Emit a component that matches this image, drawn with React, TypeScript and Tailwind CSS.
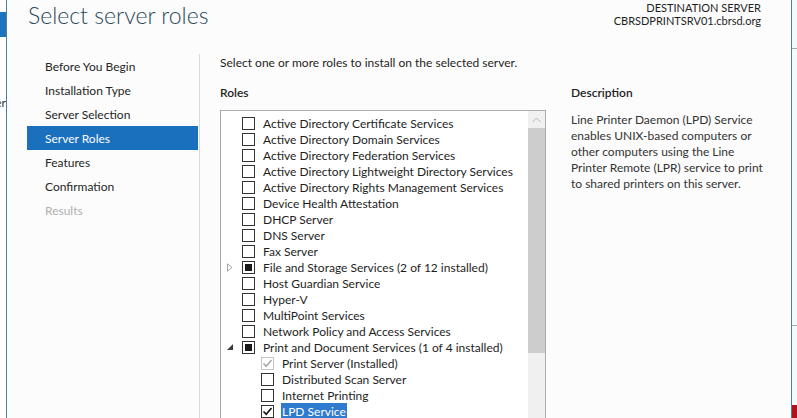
import type { ReactNode } from 'react';

type Mark = 'none' | 'partial' | 'checked' | 'installed';

interface Role {
  label: string;
  mark?: Mark;
  expander?: 'closed' | 'open';
  child?: boolean;
  selected?: boolean;
}

const ROLES: Role[] = [
  { label: 'Active Directory Certificate Services' },
  { label: 'Active Directory Domain Services' },
  { label: 'Active Directory Federation Services' },
  { label: 'Active Directory Lightweight Directory Services' },
  { label: 'Active Directory Rights Management Services' },
  { label: 'Device Health Attestation' },
  { label: 'DHCP Server' },
  { label: 'DNS Server' },
  { label: 'Fax Server' },
  { label: 'File and Storage Services (2 of 12 installed)', mark: 'partial', expander: 'closed' },
  { label: 'Host Guardian Service' },
  { label: 'Hyper-V' },
  { label: 'MultiPoint Services' },
  { label: 'Network Policy and Access Services' },
  { label: 'Print and Document Services (1 of 4 installed)', mark: 'partial', expander: 'open' },
  { label: 'Print Server (Installed)', mark: 'installed', child: true },
  { label: 'Distributed Scan Server', child: true },
  { label: 'Internet Printing', child: true },
  { label: 'LPD Service', mark: 'checked', child: true, selected: true },
];

const NAV = [
  'Before You Begin',
  'Installation Type',
  'Server Selection',
  'Server Roles',
  'Features',
  'Confirmation',
  'Results',
];

const FONT = "font-['Lato','Noto_Sans',sans-serif]";

function CheckBox({ mark = 'none' }: { mark?: Mark }) {
  const disabled = mark === 'installed';
  return (
    <span
      className={`w-[13px] h-[13px] shrink-0 border bg-white flex items-center justify-center ${
        disabled ? 'border-[#c4c4c4]' : 'border-[#333333]'
      }`}
    >
      {mark === 'partial' && <span className="w-[7px] h-[7px] bg-[#1a1a1a]" />}
      {(mark === 'checked' || mark === 'installed') && (
        <svg width="11" height="11" viewBox="0 0 11 11">
          <path
            d="M1.5 5.5 L4.2 8.3 L9.5 2"
            fill="none"
            stroke={disabled ? '#a8a8a8' : '#111111'}
            strokeWidth="1.6"
          />
        </svg>
      )}
    </span>
  );
}

function Expander({ kind }: { kind?: 'closed' | 'open' }) {
  if (kind === 'closed') {
    return (
      <svg width="6" height="9" viewBox="0 0 6 9">
        <path d="M0.5 0.8 L5 4.5 L0.5 8.2 Z" fill="none" stroke="#a6a6a6" strokeWidth="1" />
      </svg>
    );
  }
  if (kind === 'open') {
    return (
      <svg width="6" height="6" viewBox="0 0 6 6">
        <path d="M6 0 L6 6 L0 6 Z" fill="#3d3d3d" />
      </svg>
    );
  }
  return null;
}

function RoleRow({ role }: { role: Role }) {
  return (
    <div className="h-[16px] flex items-center">
      <span className="w-[21px] shrink-0 flex items-center justify-end pr-[9px]">
        <Expander kind={role.expander} />
      </span>
      {role.child && <span className="w-[19px] shrink-0" />}
      <CheckBox mark={role.mark} />
      <span
        className={`ml-[7px] px-[1px] h-[16px] pt-[1px] leading-[15px] whitespace-nowrap ${
          role.selected ? 'bg-[#2f7bcf] text-white' : 'text-[#1e1e1e]'
        }`}
      >
        {role.label}
      </span>
    </div>
  );
}

function Scrollbar() {
  return (
    <div className="w-[17px] shrink-0 flex flex-col bg-[#f0f0f0]">
      <div className="h-[17px] shrink-0 flex items-center justify-center bg-[#f0f0f0]">
        <svg width="9" height="6" viewBox="0 0 9 6">
          <path d="M0.5 5 L4.5 1 L8.5 5" fill="none" stroke="#b4b4b4" strokeWidth="1" />
        </svg>
      </div>
      <div className="h-[225px] shrink-0 bg-[#cdcdcd]" />
      <div className="flex-1" />
    </div>
  );
}

function Panel({ children }: { children: ReactNode }) {
  return <div className="flex flex-col">{children}</div>;
}

export default function App() {
  return (
    <div className={`w-[797px] h-[418px] overflow-hidden flex bg-white text-[12px] ${FONT}`}>
      {/* window behind, left */}
      <div className="w-[6px] shrink-0 flex flex-col bg-white overflow-hidden">
        <div className="h-[12px] shrink-0" />
        <div className="h-[25px] shrink-0 bg-[#1e73be]" />
        <div className="mt-[58px] h-[16px] shrink-0 flex justify-end leading-[16px] text-[#333]">
          <span className="whitespace-nowrap">er</span>
        </div>
      </div>

      {/* wizard dialog */}
      <div className="w-[786px] shrink-0 border-x border-[#4a7e9c] bg-[#fcfcfc] flex flex-col overflow-hidden">
        <div className="h-[54px] shrink-0 flex justify-between">
          <h1 className="pl-[21px] pt-[1px] text-[23px] leading-[28px] font-light text-[#2b4757]">
            Select server roles
          </h1>
          <div className="pr-[30px] pt-[1px] text-right text-[11px] leading-[13px] text-[#1e1e1e]">
            <div>DESTINATION SERVER</div>
            <div>CBRSDPRINTSRV01.cbrsd.org</div>
          </div>
        </div>

        <div className="flex-1 min-h-0 flex">
          <nav className="w-[193px] shrink-0 pl-[20px] pr-[1px] border-r border-[#d9d9d9]">
            {NAV.map((item) => (
              <div
                key={item}
                className={`h-[24px] pl-[18px] pt-[1px] flex items-center whitespace-nowrap ${
                  item === 'Server Roles'
                    ? 'bg-[#1a70bd] text-white'
                    : item === 'Results'
                      ? 'text-[#b0b0b0]'
                      : 'text-[#262626]'
                }`}
              >
                {item}
              </div>
            ))}
          </nav>

          <div className="flex-1 pl-[20px] flex flex-col text-[#1e1e1e]">
            <div className="h-[16px] shrink-0 pt-[1px] leading-[15px]">
              Select one or more roles to install on the selected server.
            </div>
            <div className="mt-[14px] shrink-0 flex gap-[25px]">
              <Panel>
                <div className="h-[16px] pt-[1px] leading-[15px] font-semibold">Roles</div>
                <div className="mt-[10px] w-[326px] h-[330px] shrink-0 border border-[#acacac] bg-white flex">
                  <div className="flex-1 pt-[4px] overflow-hidden">
                    {ROLES.map((r) => (
                      <RoleRow key={r.label} role={r} />
                    ))}
                  </div>
                  <Scrollbar />
                </div>
              </Panel>
              <Panel>
                <div className="h-[16px] pt-[1px] leading-[15px] font-semibold">Description</div>
                <div className="mt-[12px] leading-[16px] text-[#333] whitespace-nowrap">
                  <div>Line Printer Daemon (LPD) Service</div>
                  <div>enables UNIX-based computers or</div>
                  <div>other computers using the Line</div>
                  <div>Printer Remote (LPR) service to print</div>
                  <div>to shared printers on this server.</div>
                </div>
              </Panel>
            </div>
          </div>
        </div>
      </div>

      {/* window behind, right */}
      <div className="flex-1 flex flex-col bg-[#f8f8f8]">
        <div className="h-[48px] shrink-0" />
        <div className="h-[1px] shrink-0 bg-[#a8a8a8]" />
        <div className="h-[276px] shrink-0" />
        <div className="h-[1px] shrink-0 bg-[#a8a8a8]" />
        <div className="flex-1" />
        <div className="h-[13px] shrink-0 bg-[#b3101b]" />
      </div>
    </div>
  );
}
